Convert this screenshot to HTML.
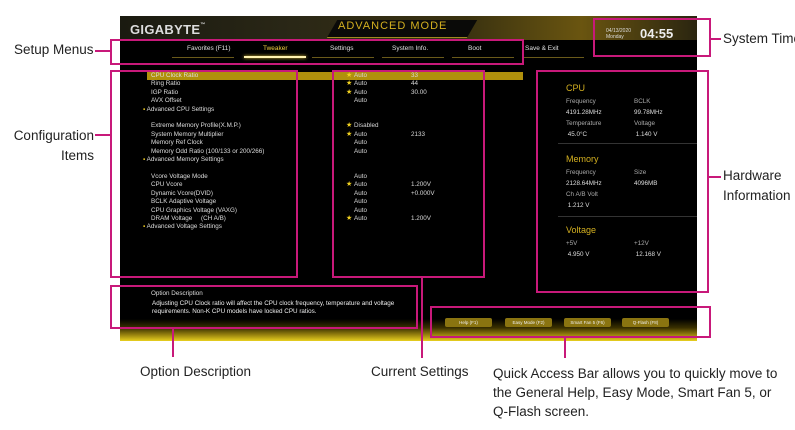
<!DOCTYPE html>
<html><head><meta charset="utf-8"><style>
*{margin:0;padding:0;box-sizing:border-box}
body{width:795px;height:430px;background:#fff;position:relative;overflow:hidden;font-family:"Liberation Sans",sans-serif}
.a{position:absolute;white-space:nowrap}
#scr{position:absolute;left:120px;top:16px;width:577px;height:325px;background:#000;overflow:hidden}
.hdr{position:absolute;left:0;top:0;width:577px;height:24px;background:linear-gradient(90deg,#1a1a10 0%,#2a2716 30%,#3a3210 60%,#6a5510 80%,#2a2510 100%)}
.glow{position:absolute;left:0;bottom:0;width:577px;height:22px;background:linear-gradient(180deg,rgba(0,0,0,0) 0%,#3a3000 40%,#a08a10 75%,#e8cf20 100%)}
.s{font-size:6.3px;color:#d8d8d8}
.y{color:#e6c420}
.m{position:absolute;border:2px solid #c8197a}
.ml{position:absolute;background:#c8197a}
.lbl{position:absolute;font-size:13.5px;color:#222;white-space:nowrap;font-family:"Liberation Sans",sans-serif}
.btn{position:absolute;top:302px;height:9px;width:47px;background:#8a7410;border-radius:2px;font-size:4.5px;color:#eee;text-align:center;line-height:9px}
.tab{position:absolute;top:29px;font-size:6.5px;color:#e0e0e0}
.ul{position:absolute;top:41px;height:1px;background:#6a5a1a}
.star{position:absolute;font-size:7px;color:#f0d020}
</style></head><body>
<div id="scr">
<div class="hdr"></div>
<div class="a" style="left:10px;top:6px;font-size:13px;font-weight:bold;color:#ddd;letter-spacing:.3px">GIGABYTE<span style="font-size:5px;vertical-align:top">™</span></div>
<div class="a" style="left:212px;top:4px;width:140px;height:18px;background:#0a0a08;transform:skewX(-30deg);border-bottom:1px solid #a08a20"></div>
<div class="a" style="left:218px;top:4px;font-size:11px;color:#d4b020;letter-spacing:1px">ADVANCED MODE</div>
<div class="tab" style="left:67px">Favorites (F11)</div>
<div class="tab" style="left:143px;color:#f0d040">Tweaker</div>
<div class="tab" style="left:210px">Settings</div>
<div class="tab" style="left:272px">System Info.</div>
<div class="tab" style="left:348px">Boot</div>
<div class="tab" style="left:405px">Save &amp; Exit</div>
<div class="ul" style="left:52px;width:62px"></div>
<div class="ul" style="left:124px;width:62px;height:2px;top:40px;background:#fff3b0;box-shadow:0 0 3px #f0d040"></div>
<div class="ul" style="left:192px;width:62px"></div>
<div class="ul" style="left:262px;width:62px"></div>
<div class="ul" style="left:332px;width:62px"></div>
<div class="ul" style="left:402px;width:62px"></div>
<div class="a" style="left:486px;top:12px;font-size:5px;color:#ddd;line-height:6px">04/13/2020<br>Monday</div>
<div class="a" style="left:520px;top:10px;font-size:13px;color:#eee;font-weight:bold">04:55</div>
<div class="a" style="left:27px;top:56px;width:376px;height:8px;background:#b0900c"></div>
<div class="a s" style="left:31px;top:56px;line-height:8.4px;color:#ddd">CPU Clock Ratio<br>Ring Ratio<br>IGP Ratio<br>AVX Offset<br><span class="y" style="margin-left:-8px">▪ </span>Advanced CPU Settings<br><br>Extreme Memory Profile(X.M.P.)<br>System Memory Multiplier<br>Memory Ref Clock<br>Memory Odd Ratio (100/133 or 200/266)<br><span class="y" style="margin-left:-8px">▪ </span>Advanced Memory Settings<br><br>Vcore Voltage Mode<br>CPU Vcore<br>Dynamic Vcore(DVID)<br>BCLK Adaptive Voltage<br>CPU Graphics Voltage (VAXG)<br>DRAM Voltage &nbsp;&nbsp;&nbsp;&nbsp;(CH A/B)<br><span class="y" style="margin-left:-8px">▪ </span>Advanced Voltage Settings</div>
<div class="a s" style="left:234px;top:56px;line-height:8.4px">Auto<br>Auto<br>Auto<br>Auto<br><br><br>Disabled<br>Auto<br>Auto<br>Auto<br><br><br>Auto<br>Auto<br>Auto<br>Auto<br>Auto<br>Auto</div>
<div class="a s" style="left:291px;top:56px;line-height:8.4px">33<br>44<br>30.00<br><br><br><br><br>2133<br><br><br><br><br><br>1.200V<br>+0.000V<br><br><br>1.200V</div>
<div class="star" style="left:226px;top:55px">★</div><div class="star" style="left:226px;top:63px">★</div><div class="star" style="left:226px;top:72px">★</div>
<div class="star" style="left:226px;top:105px">★</div><div class="star" style="left:226px;top:114px">★</div>
<div class="star" style="left:226px;top:164px">★</div><div class="star" style="left:226px;top:198px">★</div>
<div class="a" style="left:446px;top:67px;font-size:9px;color:#d4b020">CPU</div>
<div class="a s" style="left:446px;top:80px;line-height:11px;color:#aaa">Frequency<br><span style="color:#ddd">4191.28MHz</span><br>Temperature<br><span style="color:#ddd">&nbsp;45.0°C</span></div>
<div class="a s" style="left:514px;top:80px;line-height:11px;color:#aaa">BCLK<br><span style="color:#ddd">99.78MHz</span><br>Voltage<br><span style="color:#ddd">&nbsp;1.140 V</span></div>
<div class="a" style="left:438px;top:127px;width:139px;height:1px;background:#333"></div>
<div class="a" style="left:446px;top:138px;font-size:9px;color:#d4b020">Memory</div>
<div class="a s" style="left:446px;top:151px;line-height:11px;color:#aaa">Frequency<br><span style="color:#ddd">2128.64MHz</span><br>Ch A/B Volt<br><span style="color:#ddd">&nbsp;1.212 V</span></div>
<div class="a s" style="left:514px;top:151px;line-height:11px;color:#aaa">Size<br><span style="color:#ddd">4096MB</span></div>
<div class="a" style="left:438px;top:200px;width:139px;height:1px;background:#333"></div>
<div class="a" style="left:446px;top:209px;font-size:9px;color:#d4b020">Voltage</div>
<div class="a s" style="left:446px;top:222px;line-height:11px;color:#aaa">+5V<br><span style="color:#ddd">&nbsp;4.950 V</span></div>
<div class="a s" style="left:514px;top:222px;line-height:11px;color:#aaa">+12V<br><span style="color:#ddd">&nbsp;12.168 V</span></div>
<div class="glow"></div>
<div class="a" style="left:31px;top:274px;font-size:6.3px;color:#ddd">Option Description</div>
<div class="a" style="left:32px;top:284px;font-size:6.3px;color:#eee;line-height:8px">Adjusting CPU Clock ratio will affect the CPU clock frequency, temperature and voltage<br>requirements. Non-K CPU models have locked CPU ratios.</div>
<div class="btn" style="left:325px">Help (F1)</div>
<div class="btn" style="left:385px">Easy Mode (F2)</div>
<div class="btn" style="left:444px">Smart Fan 5 (F6)</div>
<div class="btn" style="left:502px">Q-Flash (F8)</div>
</div>
<div class="m" style="left:110px;top:39px;width:414px;height:26px"></div>
<div class="m" style="left:593px;top:18px;width:118px;height:39px"></div>
<div class="m" style="left:110px;top:70px;width:188px;height:208px"></div>
<div class="m" style="left:332px;top:70px;width:153px;height:208px"></div>
<div class="m" style="left:536px;top:70px;width:173px;height:223px"></div>
<div class="m" style="left:110px;top:285px;width:308px;height:44px"></div>
<div class="m" style="left:430px;top:306px;width:281px;height:32px"></div>
<div class="ml" style="left:95px;top:50px;width:15px;height:2px"></div>
<div class="ml" style="left:95px;top:134px;width:15px;height:2px"></div>
<div class="ml" style="left:711px;top:38px;width:10px;height:2px"></div>
<div class="ml" style="left:709px;top:176px;width:12px;height:2px"></div>
<div class="ml" style="left:172px;top:329px;width:2px;height:28px"></div>
<div class="ml" style="left:421px;top:278px;width:2px;height:80px"></div>
<div class="ml" style="left:564px;top:338px;width:2px;height:20px"></div>
<div class="lbl" style="left:14px;top:42px">Setup Menus</div>
<div class="lbl" style="right:701px;top:126px;text-align:right;line-height:20px">Configuration<br>Items</div>
<div class="lbl" style="left:723px;top:31px">System Time</div>
<div class="lbl" style="left:723px;top:168px">Hardware</div>
<div class="lbl" style="left:723px;top:188px">Information</div>
<div class="lbl" style="left:140px;top:364px">Option Description</div>
<div class="lbl" style="left:371px;top:364px">Current Settings</div>
<div class="lbl" style="left:493px;top:364px;line-height:19px">Quick Access Bar allows you to quickly move to<br>the General Help, Easy Mode, Smart Fan 5, or<br>Q-Flash screen.</div>
</body></html>
